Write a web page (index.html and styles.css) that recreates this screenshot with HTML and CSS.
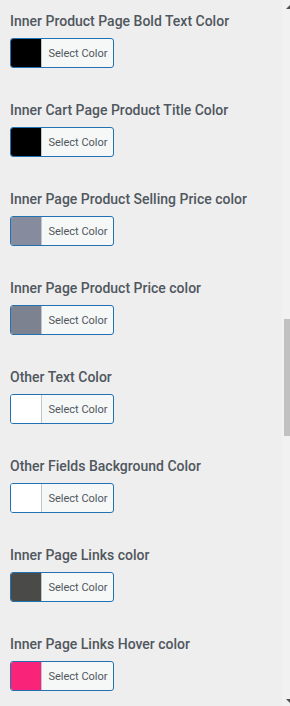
FILE: index.html
```html
<!DOCTYPE html>
<html>
<head>
<meta charset="utf-8">
<link rel="stylesheet" href="styles.css">
</head>
<body>
<div class="list">
  <div class="field">
    <div class="label">Inner Product Page Bold Text Color</div>
    <button class="picker"><span class="swatch" style="background:#000000"></span><span class="btn-text">Select Color</span></button>
  </div>
  <div class="field">
    <div class="label">Inner Cart Page Product Title Color</div>
    <button class="picker"><span class="swatch" style="background:#000000"></span><span class="btn-text">Select Color</span></button>
  </div>
  <div class="field">
    <div class="label">Inner Page Product Selling Price color</div>
    <button class="picker"><span class="swatch" style="background:#868b9e"></span><span class="btn-text">Select Color</span></button>
  </div>
  <div class="field">
    <div class="label">Inner Page Product Price color</div>
    <button class="picker"><span class="swatch" style="background:#7c8290"></span><span class="btn-text">Select Color</span></button>
  </div>
  <div class="field">
    <div class="label">Other Text Color</div>
    <button class="picker"><span class="swatch" style="background:#ffffff"></span><span class="btn-text">Select Color</span></button>
  </div>
  <div class="field">
    <div class="label">Other Fields Background Color</div>
    <button class="picker"><span class="swatch" style="background:#ffffff"></span><span class="btn-text">Select Color</span></button>
  </div>
  <div class="field">
    <div class="label">Inner Page Links color</div>
    <button class="picker"><span class="swatch" style="background:#4a4a48"></span><span class="btn-text">Select Color</span></button>
  </div>
  <div class="field">
    <div class="label">Inner Page Links Hover color</div>
    <button class="picker"><span class="swatch" style="background:#f9247a"></span><span class="btn-text">Select Color</span></button>
  </div>
</div>
<div class="scrollbar">
  <span class="arrow up"></span>
  <span class="thumb"></span>
  <span class="arrow down"></span>
</div>
</body>
</html>
```
FILE: styles.css
```css
html, body {
  margin: 0;
  padding: 0;
  background: #eeeeee;
  height: 100%;
  overflow: hidden;
}
body {
  font-family: Roboto, "Liberation Sans", sans-serif;
}
.list {
  display: flex;
  flex-direction: column;
  gap: 32px;
  padding: 11px 0 0 10px;
}
.field {
  display: flex;
  flex-direction: column;
  gap: 7px;
}
.label {
  font-size: 14px;
  line-height: 20px;
  font-weight: 500;
  color: #50575e;
  white-space: nowrap;
}
.picker {
  display: flex;
  align-items: stretch;
  width: 104px;
  height: 30px;
  padding: 0;
  margin: 0;
  border: 1px solid #2271b1;
  border-radius: 3px;
  background: #f6f7f7;
  overflow: hidden;
  cursor: pointer;
  font-family: inherit;
}
.swatch {
  width: 30px;
  flex: none;
  border-right: 1px solid #c3c4c7;
}
.btn-text {
  flex: 1;
  display: flex;
  align-items: center;
  justify-content: center;
  font-size: 11px;
  color: #50575e;
  padding-left: 1px;
}
.scrollbar {
  position: fixed;
  top: 0;
  right: 0;
  width: 8px;
  height: 706px;
  background: #f1f1f1;
}
.thumb {
  position: absolute;
  left: 2px;
  right: 0;
  top: 319px;
  height: 117px;
  background: #c1c1c1;
}
.arrow {
  position: absolute;
  right: 0;
  width: 0;
  height: 0;
}
.arrow.up {
  top: 5px;
  border-left: 4px solid transparent;
  border-bottom: 4px solid #505050;
}
.arrow.down {
  bottom: 3px;
  border-left: 4px solid transparent;
  border-top: 4px solid #505050;
}
```
